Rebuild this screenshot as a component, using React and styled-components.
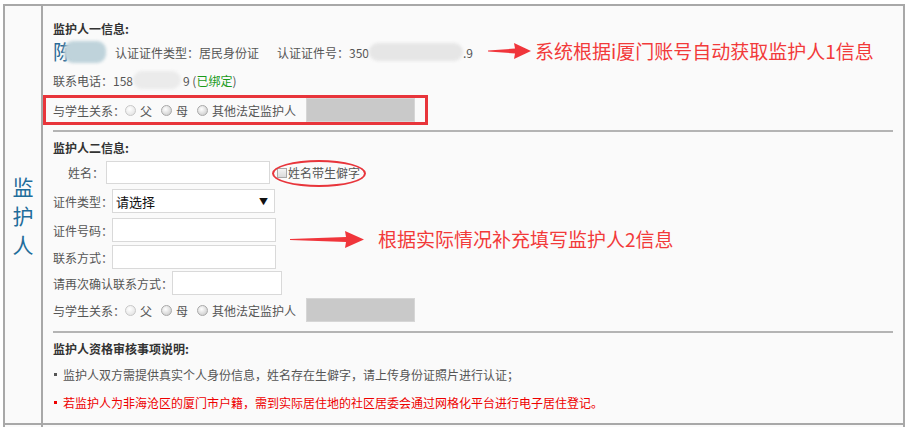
import React from "react";
import styled, { createGlobalStyle } from "styled-components";

const Global = createGlobalStyle`
  html, body { margin: 0; padding: 0; background: #ffffff; }
  body {
    font-family: "Noto Sans CJK SC", "Microsoft YaHei", sans-serif;
    font-size: 12px;
    color: #555555;
  }
  * { box-sizing: border-box; }
`;

const Page = styled.div`
  position: relative;
  width: 908px;
  height: 427px;
  overflow: hidden;
  padding: 4px 0 0 3px;
`;

const Table = styled.div`
  width: 902px;
  border: 2px solid #a8a8a8;
  border-bottom: none;
  background: #fafafa;
`;

const TableRow = styled.div`
  display: flex;
  border-bottom: 2px solid #a8a8a8;
  min-height: ${(p) => p.$h || 0}px;
`;

const SideCell = styled.div`
  width: 38px;
  flex: none;
  border-right: 2px solid #a8a8a8;
  display: flex;
  align-items: center;
  justify-content: center;
`;

const SideLabel = styled.div`
  width: 22px;
  font-size: 21px;
  line-height: 29px;
  color: #1f6d9b;
  text-align: center;
  margin-top: 2px;
`;

const MainCell = styled.div`
  flex: 1;
  padding: 10px 10px 7px 10px;
`;

const Row = styled.div`
  display: flex;
  align-items: center;
  height: ${(p) => p.$h}px;
  white-space: nowrap;
`;

const Title = styled.div`
  font-weight: bold;
  color: #333333;
  font-size: 12px;
`;

const Divider = styled.div`
  height: 2px;
  background: #b4b4b4;
  margin: ${(p) => p.$m};
`;

const Text = styled.span`
  color: ${(p) => p.$color || "#555555"};
  margin-left: ${(p) => p.$ml || 0}px;
  margin-right: ${(p) => p.$mr || 0}px;
`;

const NameGlyph = styled.span`
  font-size: 20px;
  color: #2b6a97;
  line-height: 24px;
`;

const Blob = styled.span`
  display: inline-block;
  width: ${(p) => p.$w}px;
  height: ${(p) => p.$hh || 18}px;
  margin-left: ${(p) => p.$ml || 0}px;
  margin-right: ${(p) => p.$mr || 0}px;
  background: ${(p) => p.$bg || "#e7e7e7"};
  border-radius: 9px;
  filter: blur(1.5px);
`;

const Radio = styled.span`
  display: inline-block;
  width: 11px;
  height: 11px;
  border-radius: 50%;
  border: 1px solid ${(p) => (p.$light ? "#c8c8c8" : "#a9a9a9")};
  background: radial-gradient(circle at 40% 35%, #ffffff 0%, ${(p) => (p.$light ? "#e6e6e6" : "#d2d2d2")} 75%);
  margin-right: 4px;
`;

const Option = styled.label`
  display: inline-flex;
  align-items: center;
  margin-right: 9px;
  color: #555555;
`;

const GrayBox = styled.span`
  display: inline-block;
  width: 109px;
  height: 24px;
  background: #c9c9c9;
  border: 1px solid #d6d6d6;
  margin-left: 1px;
`;

const Input = styled.span`
  display: inline-block;
  width: ${(p) => p.$w}px;
  height: ${(p) => p.$hh || 24}px;
  background: #ffffff;
  border: 1px solid #d9d9d9;
  margin-left: ${(p) => p.$ml || 0}px;
`;

const Select = styled.span`
  display: inline-flex;
  align-items: center;
  justify-content: space-between;
  width: 163px;
  height: 24px;
  background: #ffffff;
  border: 1px solid #d9d9d9;
  padding: 0 6px 0 3px;
  margin-left: -1px;
  color: #111111;
  font-size: 13px;
`;

const Caret = styled.span`
  font-size: 9px;
  color: #111111;
`;

const Check = styled.span`
  display: inline-block;
  width: 10px;
  height: 10px;
  border: 1px solid #a9a9a9;
  background: linear-gradient(#f4f4f4, #dadada);
  margin-left: 7px;
  margin-right: 1px;
`;

const Bullet = styled.span`
  display: inline-block;
  width: 3px;
  height: 3px;
  background: currentColor;
  margin: 0 6px 0 1px;
`;

const Note = styled.div`
  display: flex;
  align-items: center;
  height: 28px;
  color: ${(p) => (p.$red ? "#ee0000" : "#555555")};
  white-space: nowrap;
`;

/* annotation overlays */
const Mark = styled.div`
  position: absolute;
  left: ${(p) => p.$x}px;
  top: ${(p) => p.$y}px;
  width: ${(p) => p.$w}px;
  height: ${(p) => p.$h}px;
  border: ${(p) => p.$b}px solid #e8353b;
  border-radius: ${(p) => (p.$round ? "50%" : "0")};
  pointer-events: none;
`;

const Callout = styled.div`
  position: absolute;
  left: ${(p) => p.$x}px;
  top: ${(p) => p.$y}px;
  font-size: 19px;
  line-height: 24px;
  color: #f23a3a;
  white-space: nowrap;
`;

const ArrowSvg = styled.svg`
  position: absolute;
  left: ${(p) => p.$x}px;
  top: ${(p) => p.$y}px;
`;

function Arrow({ x, y, w, head = 16, h = 16 }) {
  const m = h / 2;
  const hx = w - head;
  return (
    <ArrowSvg $x={x} $y={y} width={w} height={h} viewBox={`0 0 ${w} ${h}`}>
      <polygon
        fill="#f0353b"
        points={`0,${m - 0.6} ${hx},${m - 2.4} ${hx - 1},0 ${w},${m} ${hx - 1},${h} ${hx},${m + 2.4} 0,${m + 0.6}`}
      />
    </ArrowSvg>
  );
}

function Relation() {
  return (
    <>
      <Text>与学生关系：</Text>
      <Option><Radio $light />父</Option>
      <Option><Radio />母</Option>
      <Option><Radio />其他法定监护人</Option>
      <GrayBox />
    </>
  );
}

export default function App() {
  return (
    <Page>
      <Global />
      <Table>
        <TableRow $h={418}>
          <SideCell>
            <SideLabel>监<br />护<br />人</SideLabel>
          </SideCell>
          <MainCell>
            <Row $h={24}><Title>监护人一信息:</Title></Row>
            <Row $h={24}>
              <NameGlyph>陈</NameGlyph>
              <Blob $w={42} $hh={22} $ml={-9} $mr={9} $bg="#bfd3db" />
              <Text>认证证件类型：居民身份证</Text>
              <Text $ml={18}>认证证件号：350</Text>
              <Blob $w={94} $bg="#e6e6e6" />
              <Text>.9</Text>
            </Row>
            <Row $h={32}>
              <Text>联系电话：158</Text>
              <Blob $w={48} $bg="#ebebeb" $mr={2} />
              <Text>9 (<Text $color="#1a9a1a">已绑定</Text>)</Text>
            </Row>
            <Row $h={28}><Relation /></Row>
            <Divider $m="6px 0 3px 0" />
            <Row $h={24}><Title>监护人二信息:</Title></Row>
            <Row $h={27}>
              <Text $ml={15} $mr={2}>姓名：</Text>
              <Input $w={164} $hh={23} />
              <Check />
              <Text>姓名带生僻字</Text>
            </Row>
            <Row $h={30}>
              <Text>证件类型：</Text>
              <Select>请选择<Caret>▼</Caret></Select>
            </Row>
            <Row $h={28}>
              <Text>证件号码：</Text>
              <Input $w={164} $ml={-1} />
            </Row>
            <Row $h={26}>
              <Text>联系方式：</Text>
              <Input $w={164} $ml={-1} />
            </Row>
            <Row $h={26}>
              <Text>请再次确认联系方式：</Text>
              <Input $w={110} $ml={-1} />
            </Row>
            <Row $h={28}><Relation /></Row>
            <Divider $m="7px 0 3px 0" />
            <Row $h={24}><Title>监护人资格审核事项说明:</Title></Row>
            <Note><Bullet />监护人双方需提供真实个人身份信息，姓名存在生僻字，请上传身份证照片进行认证；</Note>
            <Note $red><Bullet />若监护人为非海沧区的厦门市户籍，需到实际居住地的社区居委会通过网格化平台进行电子居住登记。</Note>
          </MainCell>
        </TableRow>
        <TableRow $h={20}>
          <SideCell />
          <MainCell />
        </TableRow>
      </Table>

      <Mark $x={43} $y={95} $w={385} $h={30} $b={3} />
      <Mark $x={272} $y={160} $w={94} $h={27} $b={2} $round />
      <Arrow x={488} y={43} w={43} head={16} h={16} />
      <Callout $x={535} $y={39}>系统根据i厦门账号自动获取监护人1信息</Callout>
      <Arrow x={290} y={231} w={74} head={18} h={17} />
      <Callout $x={378} $y={227}>根据实际情况补充填写监护人2信息</Callout>
    </Page>
  );
}
